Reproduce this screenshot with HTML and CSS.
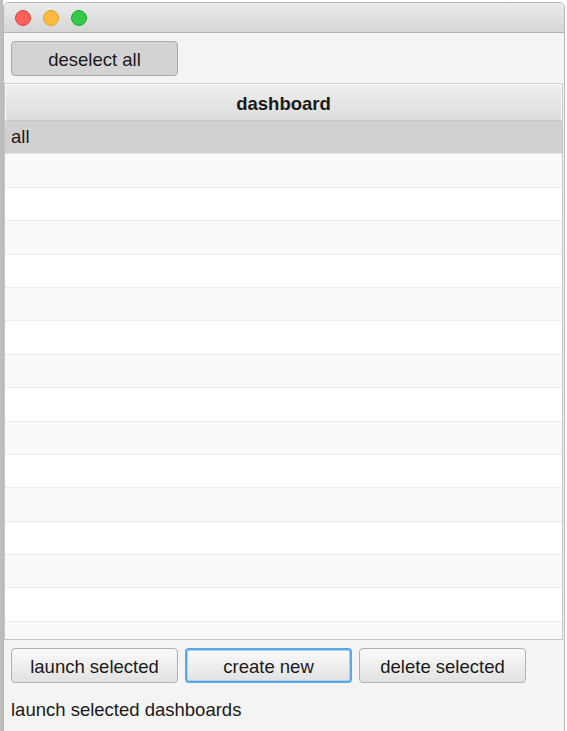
FILE: index.html
```html
<!DOCTYPE html>
<html>
<head>
<meta charset="utf-8">
<link rel="stylesheet" href="styles.css">
</head>
<body>
<div class="window">
  <div class="titlebar">
    <span class="light red"></span>
    <span class="light yellow"></span>
    <span class="light green"></span>
  </div>
  <div class="content">
    <div class="toolbar">
      <button class="btn pressed">deselect all</button>
    </div>
    <div class="table">
      <div class="thead">dashboard</div>
      <div class="tbody">
        <div class="row selected">all</div>
        <div class="row odd"></div>
        <div class="row"></div>
        <div class="row odd"></div>
        <div class="row"></div>
        <div class="row odd"></div>
        <div class="row"></div>
        <div class="row odd"></div>
        <div class="row"></div>
        <div class="row odd"></div>
        <div class="row"></div>
        <div class="row odd"></div>
        <div class="row"></div>
        <div class="row odd"></div>
        <div class="row"></div>
        <div class="row odd"></div>
      </div>
    </div>
    <div class="actions">
      <button class="btn">launch selected</button>
      <button class="btn focused">create new</button>
      <button class="btn">delete selected</button>
    </div>
    <div class="status">launch selected dashboards</div>
  </div>
</div>
</body>
</html>
```

FILE: styles.css
```css
html, body {
  margin: 0;
  padding: 0;
  height: 100%;
  overflow: hidden;
}
body {
  background: linear-gradient(to right, #bdbdbd 0, #bdbdbd 3px, #ffffff 3px);
  font-family: "Liberation Sans", Arial, sans-serif;
  color: #1a1a1a;
}
.window {
  margin-left: 3px;
  margin-top: 2px;
  width: 562px;
  height: 740px;
  box-sizing: border-box;
  border: 1px solid #b8b8b8;
  border-radius: 5px 5px 0 0;
  background: #f4f4f4;
  display: flex;
  flex-direction: column;
  overflow: hidden;
}
.titlebar {
  height: 29px;
  flex: none;
  background: linear-gradient(to bottom, #ececec, #d5d5d5);
  border-bottom: 1px solid #b6b6b6;
  display: flex;
  align-items: center;
  padding-left: 11px;
  gap: 12px;
}
.light {
  width: 16px;
  height: 16px;
  border-radius: 50%;
  box-sizing: border-box;
  margin-top: 1px;
}
.red { background: #fc605c; border: 1px solid #e0443e; }
.yellow { background: #fdbc40; border: 1px solid #dea123; }
.green { background: #34c84a; border: 1px solid #1aab29; }
.content {
  display: flex;
  flex-direction: column;
  flex: 1;
}
.toolbar {
  padding: 8px 7px 7px;
  display: flex;
}
.btn {
  width: 167px;
  height: 35px;
  box-sizing: border-box;
  border: 1px solid #b0b0b0;
  border-radius: 4px;
  background: linear-gradient(to bottom, #fafafa, #e2e2e2);
  font-family: "Liberation Sans", Arial, sans-serif;
  font-size: 18.5px;
  color: #1a1a1a;
  padding: 2px 0 0;
}
.btn.pressed {
  background: #d3d3d3;
  border-color: #a9a9a9;
}
.btn.focused {
  border: 2px solid #5ba8e8;
  box-shadow: inset 0 0 0 1px #a9d1f2;
}
.table {
  margin: 0 1px 0 0;
  border: 1px solid #c6c6c6;
  border-top-color: #d0d0d0;
  background: #fff;
  height: 557px;
  box-sizing: border-box;
  display: flex;
  flex-direction: column;
  overflow: hidden;
}
.thead {
  height: 37px;
  flex: none;
  box-sizing: border-box;
  border: 1px solid #fafafa;
  border-bottom: 1px solid #c8c8c8;
  background: linear-gradient(to bottom, #eeeeee, #dddddd);
  font-weight: bold;
  font-size: 18.5px;
  display: flex;
  align-items: center;
  justify-content: center;
  padding-top: 3px;
}
.tbody {
  flex: 1;
  overflow: hidden;
}
.row {
  height: 33.4px;
  box-sizing: border-box;
  border-bottom: 1px solid #ebebeb;
  background: #ffffff;
  font-size: 18.5px;
  display: flex;
  align-items: center;
  padding-left: 6px;
}
.row.odd { background: #f9f9f9; }
.row.selected {
  background: #d1d1d1;
  border-bottom-color: #e4e4e4;
}
.actions {
  display: flex;
  gap: 7px;
  padding: 8px 7px 0;
}
.status {
  padding: 16px 7px 0;
  font-size: 18.5px;
}
```
